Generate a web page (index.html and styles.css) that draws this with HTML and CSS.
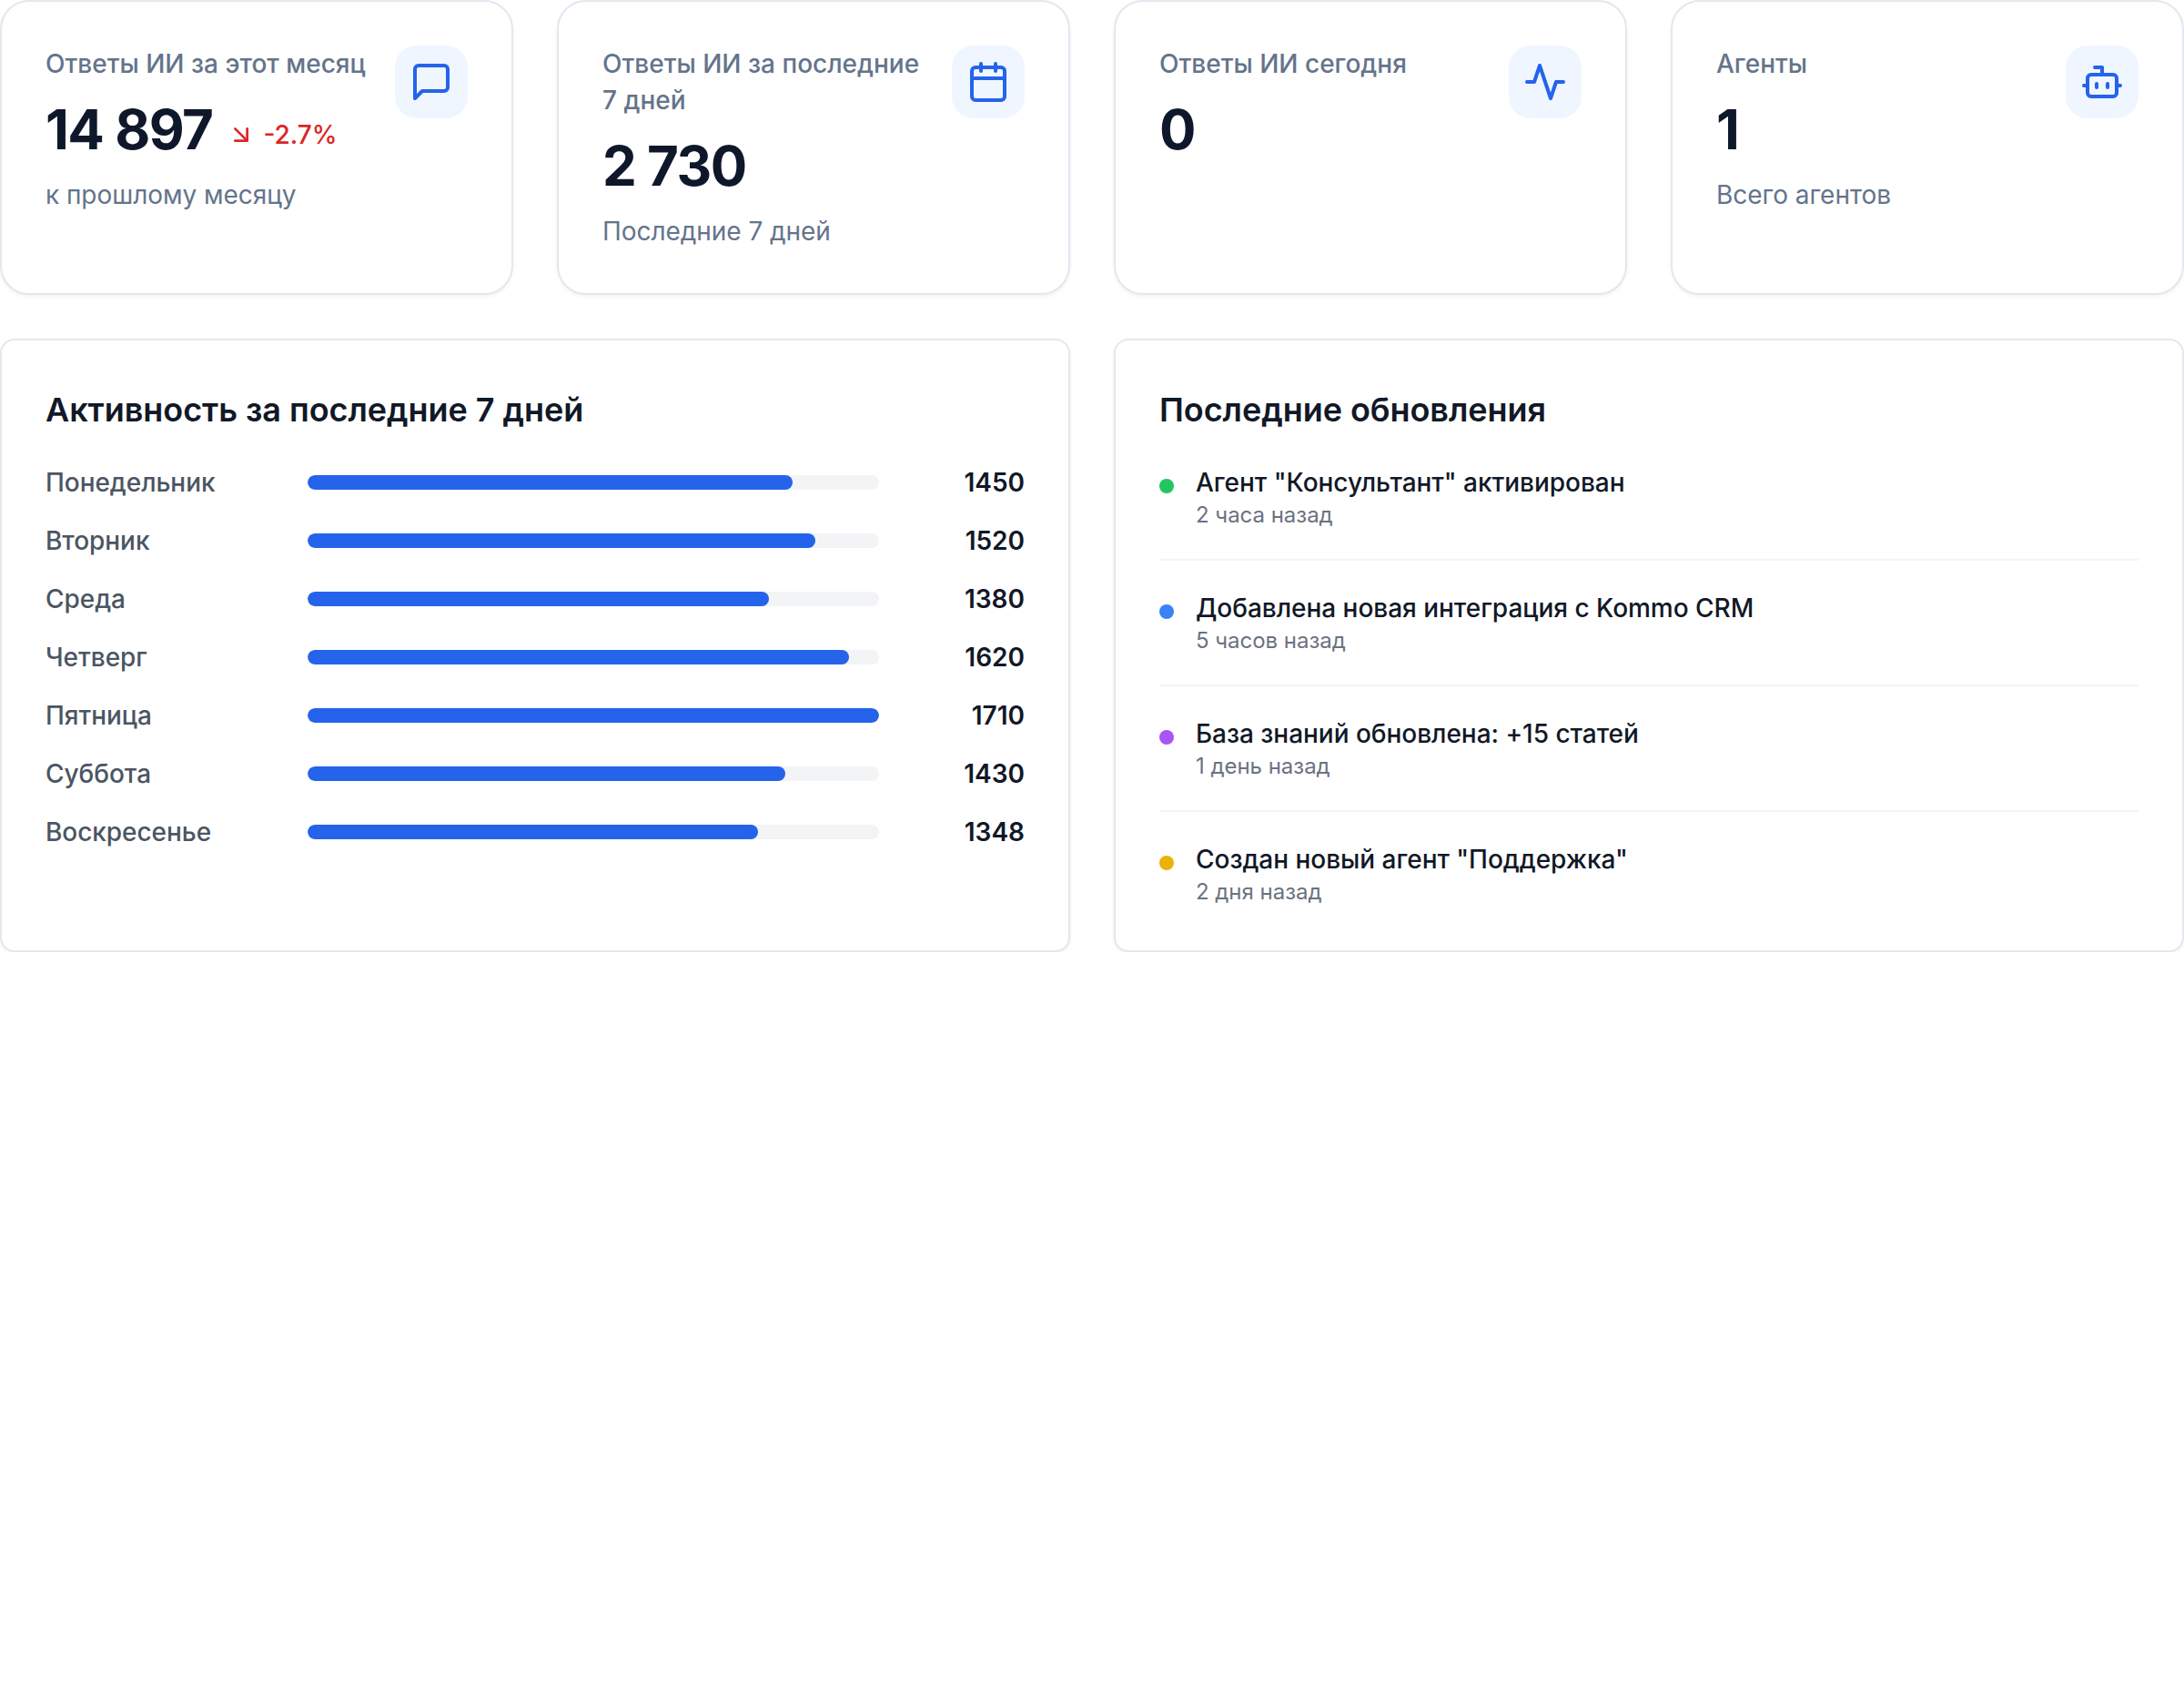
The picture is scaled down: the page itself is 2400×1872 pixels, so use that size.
FILE: index.html
```html
<!DOCTYPE html>
<html lang="ru">
<head>
    <meta charset="UTF-8">
    <meta name="viewport" content="width=device-width, initial-scale=1.0">
    <title>Панель управления</title>
    <link rel="stylesheet" href="styles.css">
</head>
<body>
<section class="stats">
    <div class="stat-card">
        <div class="stat-body">
            <p class="stat-label">Ответы ИИ за этот месяц</p>
            <div class="stat-row">
                <p class="stat-value">14 897</p>
                <div class="stat-delta">
                    <svg class="delta-icon" viewBox="0 0 24 24"><path d="M7 7l10 10"/><path d="M17 7v10H7"/></svg>
                    <span>-2.7%</span>
                </div>
            </div>
            <p class="stat-note">к прошлому месяцу</p>
        </div>
        <div class="stat-icon">
            <svg viewBox="0 0 24 24"><path d="M21 15a2 2 0 0 1-2 2H7l-4 4V5a2 2 0 0 1 2-2h14a2 2 0 0 1 2 2z"/></svg>
        </div>
    </div>
    <div class="stat-card">
        <div class="stat-body">
            <p class="stat-label">Ответы ИИ за последние 7 дней</p>
            <p class="stat-value">2 730</p>
            <p class="stat-note">Последние 7 дней</p>
        </div>
        <div class="stat-icon">
            <svg viewBox="0 0 24 24"><rect x="3" y="4" width="18" height="18" rx="2"/><path d="M16 2v4"/><path d="M8 2v4"/><path d="M3 10h18"/></svg>
        </div>
    </div>
    <div class="stat-card">
        <div class="stat-body">
            <p class="stat-label">Ответы ИИ сегодня</p>
            <p class="stat-value">0</p>
        </div>
        <div class="stat-icon">
            <svg viewBox="0 0 24 24"><polyline points="22 12 18 12 15 21 9 3 6 12 2 12"/></svg>
        </div>
    </div>
    <div class="stat-card">
        <div class="stat-body">
            <p class="stat-label">Агенты</p>
            <p class="stat-value">1</p>
            <p class="stat-note">Всего агентов</p>
        </div>
        <div class="stat-icon">
            <svg viewBox="0 0 24 24"><path d="M12 8V4H8"/><rect x="4" y="8" width="16" height="12" rx="2"/><path d="M2 14h2"/><path d="M20 14h2"/><path d="M15 13v2"/><path d="M9 13v2"/></svg>
        </div>
    </div>
</section>

<section class="panels">
    <div class="panel">
        <h2>Активность за последние 7 дней</h2>
        <div class="bars">
            <div class="bar-row">
                <span class="bar-label">Понедельник</span>
                <div class="bar-track"><div class="bar-fill" style="width: 84.8%"></div></div>
                <span class="bar-value">1450</span>
            </div>
            <div class="bar-row">
                <span class="bar-label">Вторник</span>
                <div class="bar-track"><div class="bar-fill" style="width: 88.9%"></div></div>
                <span class="bar-value">1520</span>
            </div>
            <div class="bar-row">
                <span class="bar-label">Среда</span>
                <div class="bar-track"><div class="bar-fill" style="width: 80.7%"></div></div>
                <span class="bar-value">1380</span>
            </div>
            <div class="bar-row">
                <span class="bar-label">Четверг</span>
                <div class="bar-track"><div class="bar-fill" style="width: 94.7%"></div></div>
                <span class="bar-value">1620</span>
            </div>
            <div class="bar-row">
                <span class="bar-label">Пятница</span>
                <div class="bar-track"><div class="bar-fill" style="width: 100%"></div></div>
                <span class="bar-value">1710</span>
            </div>
            <div class="bar-row">
                <span class="bar-label">Суббота</span>
                <div class="bar-track"><div class="bar-fill" style="width: 83.6%"></div></div>
                <span class="bar-value">1430</span>
            </div>
            <div class="bar-row">
                <span class="bar-label">Воскресенье</span>
                <div class="bar-track"><div class="bar-fill" style="width: 78.8%"></div></div>
                <span class="bar-value">1348</span>
            </div>
        </div>
    </div>
    <div class="panel">
        <h2>Последние обновления</h2>
        <div class="updates">
            <div class="update">
                <span class="dot dot-green"></span>
                <div>
                    <p class="update-title">Агент "Консультант" активирован</p>
                    <p class="update-time">2 часа назад</p>
                </div>
            </div>
            <div class="update">
                <span class="dot dot-blue"></span>
                <div>
                    <p class="update-title">Добавлена новая интеграция с Kommo CRM</p>
                    <p class="update-time">5 часов назад</p>
                </div>
            </div>
            <div class="update">
                <span class="dot dot-purple"></span>
                <div>
                    <p class="update-title">База знаний обновлена: +15 статей</p>
                    <p class="update-time">1 день назад</p>
                </div>
            </div>
            <div class="update">
                <span class="dot dot-yellow"></span>
                <div>
                    <p class="update-title">Создан новый агент "Поддержка"</p>
                    <p class="update-time">2 дня назад</p>
                </div>
            </div>
        </div>
    </div>
</section>
</body>
</html>
```

FILE: styles.css
```css
* {
    box-sizing: border-box;
}
body {
    margin: 0;
    background-color: white;
    font-family: 'Inter', 'Noto Sans', sans-serif;
    color: #111827;
}
p, h2 {
    margin: 0;
}
.stats {
    display: grid;
    grid-template-columns: repeat(4, 1fr);
    gap: 48px;
    margin-bottom: 48px;
}
.stat-card {
    display: flex;
    justify-content: space-between;
    align-items: flex-start;
    height: 324px;
    padding: 48px;
    background: white;
    border: 2px solid #e2e8f0;
    border-radius: 32px;
    box-shadow: 0 2px 4px rgba(0, 0, 0, 0.05);
}
.stat-label {
    font-size: 28px;
    line-height: 40px;
    font-weight: 500;
    color: #64748b;
}
.stat-value {
    margin-top: 16px;
    font-size: 60px;
    line-height: 72px;
    font-weight: 700;
    letter-spacing: -1.5px;
    color: #0f172a;
}
.stat-row {
    display: flex;
    align-items: center;
    gap: 16px;
}
.stat-delta {
    display: flex;
    align-items: center;
    gap: 8px;
    margin-top: 28px;
    font-size: 28px;
    line-height: 40px;
    font-weight: 500;
    color: #dc2626;
}
.delta-icon {
    width: 32px;
    height: 32px;
    fill: none;
    stroke: currentColor;
    stroke-width: 2;
    stroke-linecap: round;
    stroke-linejoin: round;
}
.stat-note {
    margin-top: 16px;
    font-size: 28px;
    line-height: 40px;
    letter-spacing: -0.05px;
    color: #64748b;
}
.stat-icon {
    flex-shrink: 0;
    display: flex;
    align-items: center;
    justify-content: center;
    width: 80px;
    height: 80px;
    margin-left: 32px;
    background-color: #eff6ff;
    border-radius: 24px;
}
.stat-icon svg {
    width: 48px;
    height: 48px;
    fill: none;
    stroke: #2563eb;
    stroke-width: 2;
    stroke-linecap: round;
    stroke-linejoin: round;
}
.panels {
    display: grid;
    grid-template-columns: repeat(2, 1fr);
    gap: 48px;
}
.panel {
    padding: 48px;
    background: white;
    border: 2px solid #e5e7eb;
    border-radius: 16px;
    box-shadow: 0 2px 4px rgba(0, 0, 0, 0.05);
}
.panel h2 {
    margin-bottom: 32px;
    font-size: 36px;
    line-height: 56px;
    font-weight: 600;
    letter-spacing: -0.05px;
    color: #111827;
}
.bars {
    display: flex;
    flex-direction: column;
    gap: 24px;
}
.bar-row {
    display: flex;
    align-items: center;
    font-size: 28px;
    line-height: 40px;
}
.bar-label {
    width: 288px;
    font-weight: 500;
    letter-spacing: -0.05px;
    color: #4b5563;
}
.bar-track {
    flex: 1;
    height: 16px;
    background-color: #f3f4f6;
    border-radius: 999px;
    overflow: hidden;
}
.bar-fill {
    height: 100%;
    background-color: #2563eb;
    border-radius: 999px;
}
.bar-value {
    width: 160px;
    text-align: right;
    font-weight: 600;
    color: #111827;
}
.update {
    display: flex;
    align-items: flex-start;
    gap: 24px;
    padding-bottom: 32px;
    margin-bottom: 32px;
    border-bottom: 2px solid #f3f4f6;
}
.update:last-child {
    padding-bottom: 0;
    margin-bottom: 0;
    border-bottom: none;
}
.dot {
    flex-shrink: 0;
    width: 16px;
    height: 16px;
    margin-top: 16px;
    border-radius: 50%;
}
.dot-green { background-color: #22c55e; }
.dot-blue { background-color: #3b82f6; }
.dot-purple { background-color: #a855f7; }
.dot-yellow { background-color: #eab308; }
.update-title {
    font-size: 28px;
    line-height: 40px;
    font-weight: 500;
    letter-spacing: -0.03px;
    color: #111827;
}
.update-time {
    font-size: 24px;
    line-height: 32px;
    letter-spacing: -0.03px;
    color: #6b7280;
}
```
